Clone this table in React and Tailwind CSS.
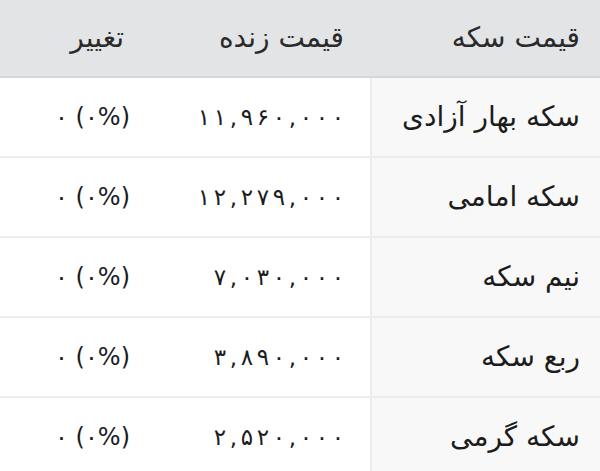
import React from 'react'

const rows = [
  { name: 'سکه بهار آزادی', price: '۱۱,۹۶۰,۰۰۰' },
  { name: 'سکه امامی', price: '۱۲,۲۷۹,۰۰۰' },
  { name: 'نیم سکه', price: '۷,۰۳۰,۰۰۰' },
  { name: 'ربع سکه', price: '۳,۸۹۰,۰۰۰' },
  { name: 'سکه گرمی', price: '۲,۵۲۰,۰۰۰' },
]

// digits in the picture are spaced wide apart
function Price({ value }) {
  return (
    <span dir="ltr" className="inline-flex">
      {value.split('').map((ch, i) => (
        <span
          key={i}
          className={`inline-block text-center ${ch === ',' ? 'w-[11px]' : 'w-[16px]'}`}
        >
          {ch}
        </span>
      ))}
    </span>
  )
}

export default function App() {
  return (
    <div
      dir="rtl"
      className="w-[600px] h-[471px] overflow-hidden bg-white text-[#1c1c1c]"
      style={{ fontFamily: '"DejaVu Sans", "Noto Sans", sans-serif' }}
    >
      {/* header */}
      <div className="grid grid-cols-[230px_220px_1fr] h-[78px] bg-[#e3e4e6] border-b-2 border-[#d6d7d9] text-[#2a2a2a] text-[28px]">
        <div className="flex items-center pr-5">قیمت سکه</div>
        <div className="flex items-center pr-[26px]">قیمت زنده</div>
        <div className="flex items-center pr-[26px]">تغییر</div>
      </div>

      {rows.map((r) => (
        <div
          key={r.name}
          className="grid grid-cols-[230px_220px_1fr] h-[80px] border-b-2 border-[#ececec]"
        >
          <div className="flex items-center pr-5 bg-[#f8f8f8] border-l-2 border-[#ececec] text-[28px]">
            {r.name}
          </div>
          <div className="flex items-center pr-[24px] text-[23px]">
            <Price value={r.price} />
          </div>
          <div className="flex items-center pr-[20px] text-[24px]">(۰%) ۰</div>
        </div>
      ))}
    </div>
  )
}
